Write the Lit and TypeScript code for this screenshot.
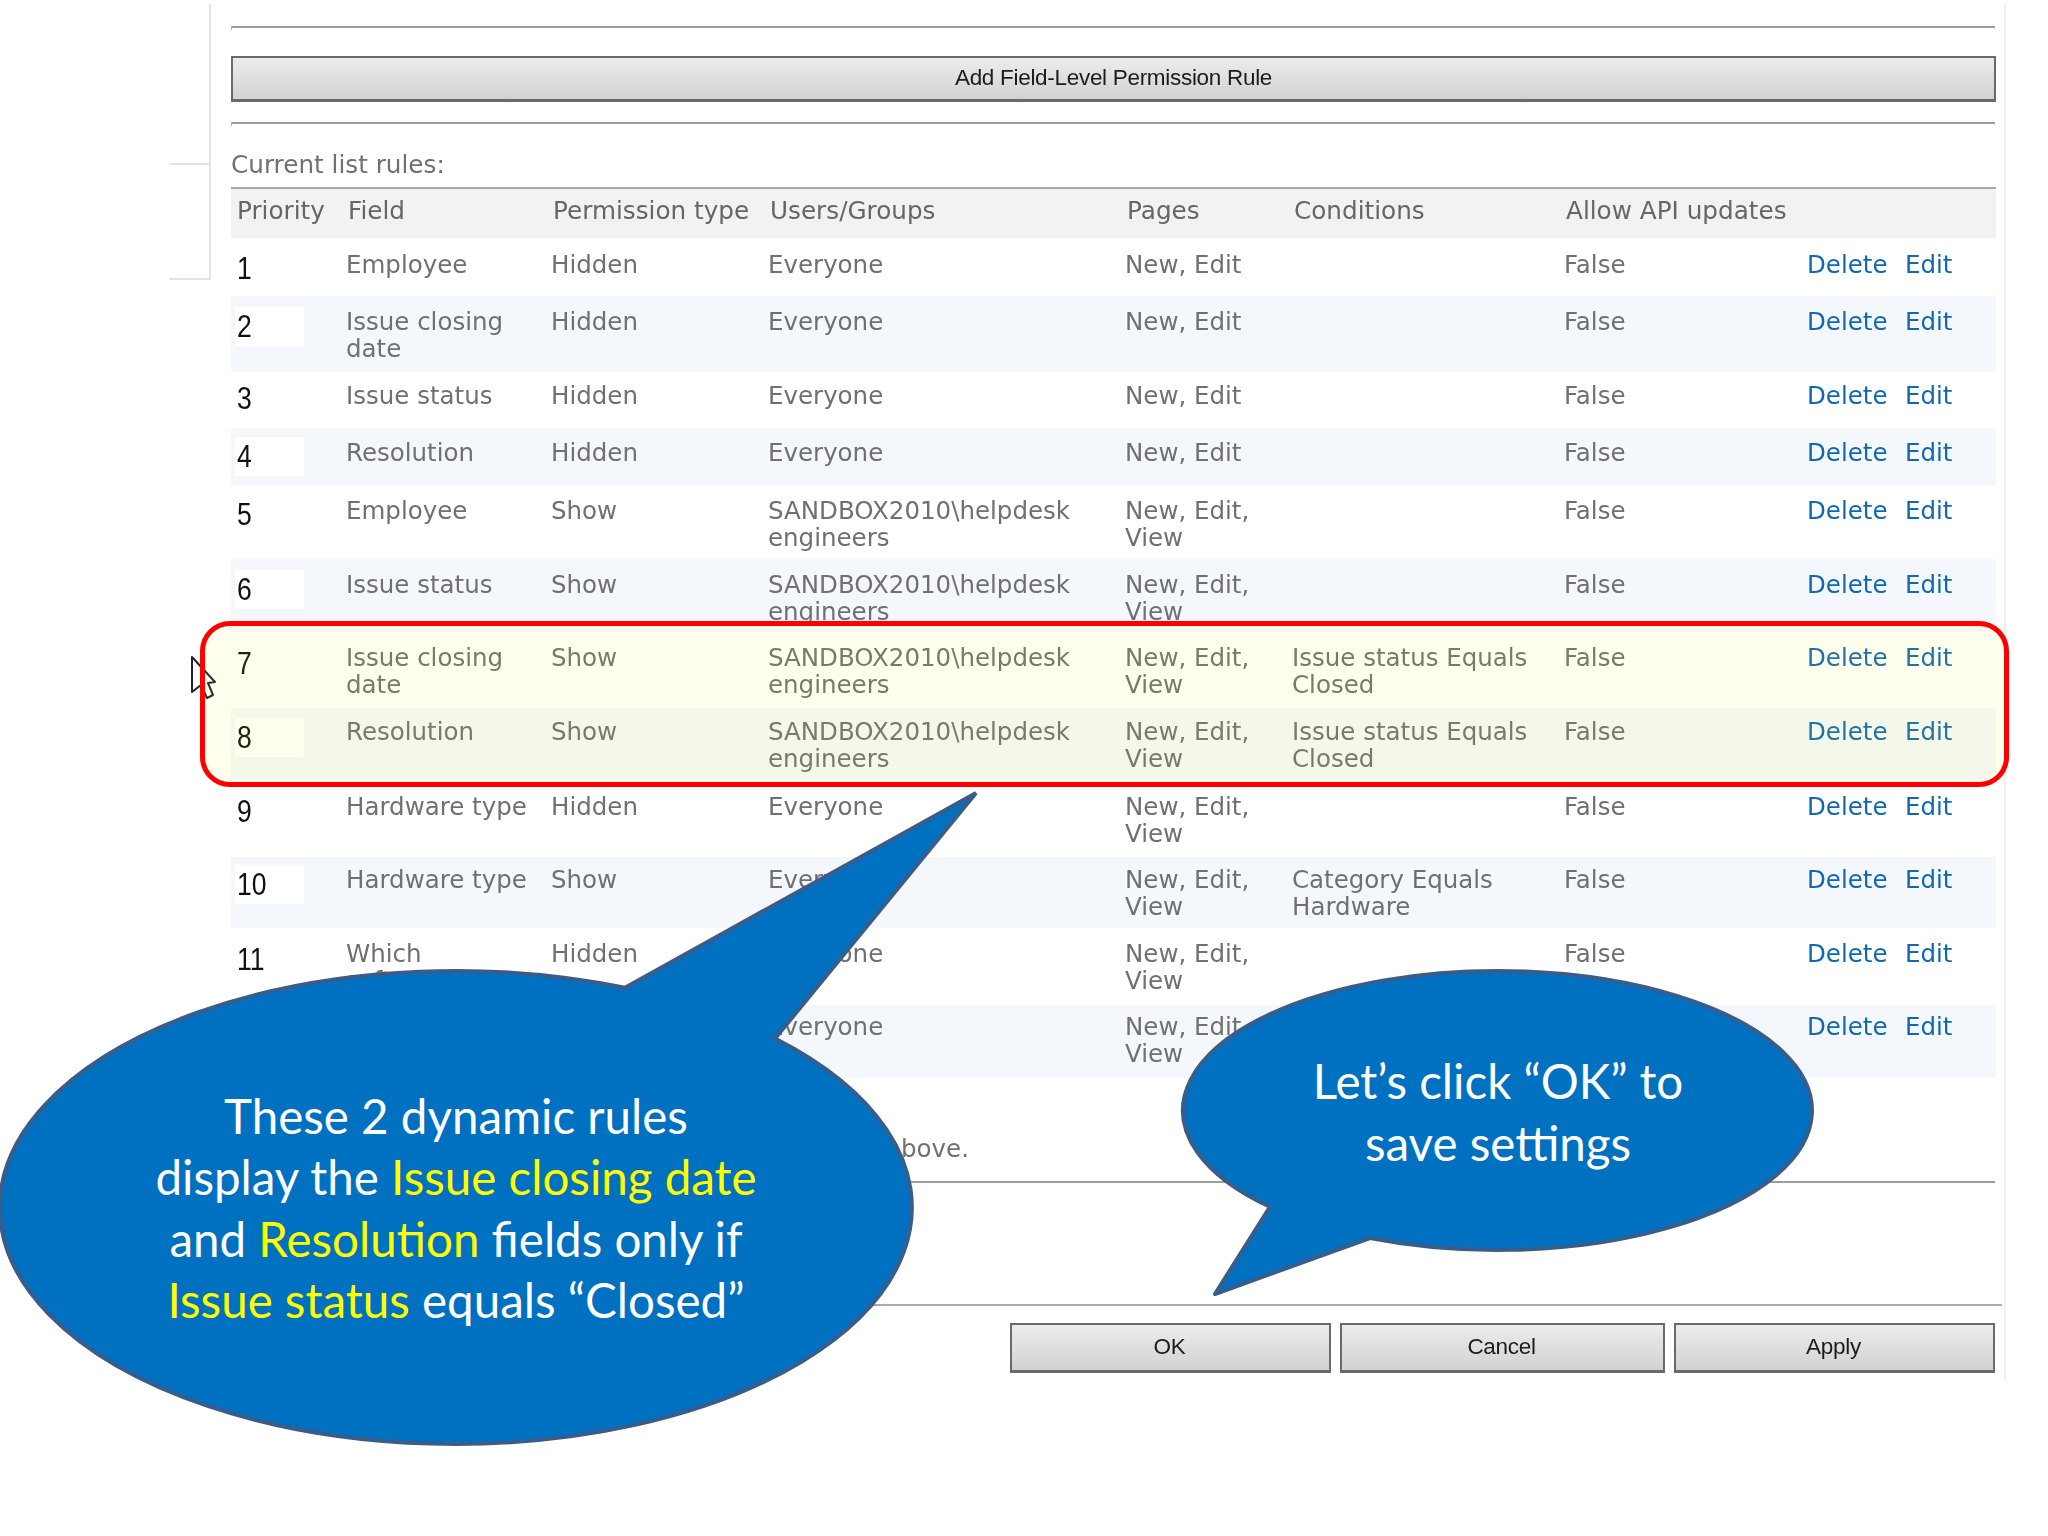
import { LitElement, html, css } from "lit";
import { customElement } from "lit/decorators.js";

interface Rule {
  n: number; h: number; t: number; b: number; alt: boolean;
  field: string; type: string; users: string; pages: string; cond: string;
}
const HD = "SANDBOX2010\\helpdesk engineers";
const NE = "New, Edit";
const NEV = "New, Edit, View";
const ICD = "Issue closing date";
const CLOSED = "Issue status Equals Closed";
const WF = "Which software";
const rules: Rule[] = [
  { n: 1, h: 58, t: 13, b: 11, alt: false, field: "Employee", type: "Hidden", users: "Everyone", pages: NE, cond: "" },
  { n: 2, h: 76, t: 12, b: 11, alt: true, field: ICD, type: "Hidden", users: "Everyone", pages: NE, cond: "" },
  { n: 3, h: 56, t: 10, b: 7, alt: false, field: "Issue status", type: "Hidden", users: "Everyone", pages: NE, cond: "" },
  { n: 4, h: 58, t: 11, b: 9, alt: true, field: "Resolution", type: "Hidden", users: "Everyone", pages: NE, cond: "" },
  { n: 5, h: 73, t: 11, b: 9, alt: false, field: "Employee", type: "Show", users: HD, pages: NEV, cond: "" },
  { n: 6, h: 73, t: 12, b: 11, alt: true, field: "Issue status", type: "Show", users: HD, pages: NEV, cond: "" },
  { n: 7, h: 76, t: 12, b: 12, alt: false, field: ICD, type: "Show", users: HD, pages: NEV, cond: CLOSED },
  { n: 8, h: 74, t: 10, b: 10, alt: true, field: "Resolution", type: "Show", users: HD, pages: NEV, cond: CLOSED },
  { n: 9, h: 75, t: 11, b: 10, alt: false, field: "Hardware type", type: "Hidden", users: "Everyone", pages: NEV, cond: "" },
  { n: 10, h: 71, t: 9, b: 8, alt: true, field: "Hardware type", type: "Show", users: "Everyone", pages: NEV, cond: "Category Equals Hardware" },
  { n: 11, h: 77, t: 12, b: 12, alt: false, field: WF, type: "Hidden", users: "Everyone", pages: NEV, cond: "" },
  { n: 12, h: 73, t: 8, b: 6, alt: true, field: WF, type: "Show", users: "Everyone", pages: NEV, cond: "" },
];

@customElement("app-root")
export class AppRoot extends LitElement {
  static styles = css`
    :host { display: block; position: relative; width: 2048px; height: 1536px; overflow: hidden; background: #fff; font-family: "DejaVu Sans", Verdana, sans-serif; font-size: 24.5px; color: #707070; }
    .frame { display: flex; padding: 4px 0 0 169px; filter: blur(0.45px); }
    .side { width: 42px; height: 276px; box-sizing: border-box; border-right: 2px solid #e4e4e4; border-bottom: 2px solid #e4e4e4; flex: none; }
    .side div { height: 159px; border-bottom: 2px solid #e4e4e4; }
    .main { width: 1795px; height: 1376px; box-sizing: border-box; padding: 22px 8px 0 20px; border-right: 2px solid #f0f0f0; flex: none; }
    .hr { box-sizing: border-box; height: 4px; border-top: 2px solid #9c9c9c; border-left: 1px solid #bbb; margin-right: 1px; }
    .btn { box-sizing: border-box; display: flex; align-items: center; justify-content: center; border: 2px solid #6a6a6a; border-bottom-width: 3px; background: linear-gradient(#ececec, #d2d2d2); color: #1c1c1c; font-family: "Liberation Sans", Arial, sans-serif; font-size: 22.5px; letter-spacing: -0.3px; padding-bottom: 1px; }
    .add { height: 46px; margin-top: 26px; }
    .hr2 { margin-top: 20px; }
    .label { height: 61px; box-sizing: border-box; padding-top: 25px; line-height: 27px; font-size: 24.7px; }
    .row { display: grid; grid-template-columns: 111px 205px 217px 357px 167px 272px 243px 98px 1fr; box-sizing: border-box; padding-left: 4px; line-height: 27px; }
    .row.alt { background: #f4f8fc; }
    .head { height: 51px; background: #f2f2f2; border-top: 2px solid #a8a8a8; padding-top: 8px; color: #666; font-size: 24.7px; }
    .head span { padding-left: 2px; white-space: nowrap; }
    .cell { padding-top: var(--t); padding-right: 20px; }
    .cell.link { padding-right: 0; }
    .num { margin-top: var(--b); width: 69px; height: 39px; line-height: 39px; padding-left: 2px; box-sizing: border-box; color: #111; font-family: "Liberation Sans", Arial, sans-serif; font-size: 32px; }
    .num span { display: inline-block; transform: scaleX(0.83); transform-origin: left center; }
    .alt .num { background: #fff; }
    .link { color: #1268b0; }
    .note { height: 103px; box-sizing: border-box; padding: 57px 0 0 655px; line-height: 27px; }
    .hr3 { box-sizing: border-box; height: 4px; border-top: 2px solid #9c9c9c; margin-right: 1px; }
    .hr4 { box-sizing: border-box; height: 4px; border-top: 2px solid #aaa; margin: 119px -6px 0 0; }
    .actions { display: flex; justify-content: flex-end; margin: 15px 1px 0 0; }
    .actions .btn { height: 50px; width: 321px; margin-left: 9px; padding-right: 2px; }
    .actions .btn.wide { width: 325px; }
    .overlay { position: absolute; left: 0; top: 0; width: 2048px; height: 1536px; pointer-events: none; }
    .hilite { position: absolute; left: 200px; top: 621px; width: 1809px; height: 166px; box-sizing: border-box; border: 5.5px solid #f00; border-radius: 30px; background: rgba(255, 255, 0, 0.07); }
    .say { position: absolute; transform: translateX(-50%); text-align: center; white-space: nowrap; color: #fff; font-family: "Lato", "Open Sans", sans-serif; font-size: 47.5px; line-height: 61.3px; }
    .say b { font-weight: 400; color: #ff0; }
    .s1 { left: 456px; top: 1085px; }
    .s2 { left: 1498px; top: 1050px; line-height: 62px; }
  `;

  private renderRow(r: Rule) {
    return html`
      <div class="row ${r.alt ? "alt" : ""}" style="height:${r.h}px;--t:${r.t}px;--b:${r.b}px">
        <div class="num"><span>${r.n}</span></div>
        <div class="cell">${r.field}</div>
        <div class="cell">${r.type}</div>
        <div class="cell">${r.users}</div>
        <div class="cell">${r.pages}</div>
        <div class="cell">${r.cond}</div>
        <div class="cell">False</div>
        <div class="cell link">Delete</div>
        <div class="cell link">Edit</div>
      </div>
    `;
  }

  render() {
    return html`
      <div class="frame">
        <div class="side"><div></div></div>
        <div class="main">
          <div class="hr"></div>
          <div class="btn add">Add Field-Level Permission Rule</div>
          <div class="hr hr2"></div>
          <div class="label">Current list rules:</div>
          <div class="row head">
            <span>Priority</span><span>Field</span><span>Permission type</span><span>Users/Groups</span><span>Pages</span><span>Conditions</span><span>Allow API updates</span>
          </div>
          ${rules.map((r) => this.renderRow(r))}
          <div class="note">above.</div>
          <div class="hr3"></div>
          <div class="hr4"></div>
          <div class="actions">
            <div class="btn">OK</div>
            <div class="btn wide">Cancel</div>
            <div class="btn">Apply</div>
          </div>
        </div>
      </div>
      <svg class="overlay" viewBox="0 0 2048 1536">
        <path d="M192 657 L192 692 L201 685 L207 698 L213 695 L208 683 L215 682 Z" fill="#fff" stroke="#1a2233" stroke-width="2" stroke-linejoin="round"></path>
      </svg>
      <div class="hilite"></div>
      <svg class="overlay" viewBox="0 0 2048 1536">
        <path d="M775 1038.5 A456 236.5 0 1 1 625 987.8 L976 793 Z" fill="#0070c0" stroke="#385d8a" stroke-width="4" stroke-linejoin="miter"></path>
        <path d="M1270 1206.8 A314.5 139.5 0 1 1 1370 1238 L1215 1294 Z" fill="#0070c0" stroke="#385d8a" stroke-width="4" stroke-linejoin="round"></path>
      </svg>
      <div class="say s1">These 2 dynamic rules<br />display the <b>Issue closing date</b><br />and <b>Resolution</b> fields only if<br /><b>Issue status</b> equals “Closed”</div>
      <div class="say s2">Let’s click “OK” to<br />save settings</div>
    `;
  }
}
